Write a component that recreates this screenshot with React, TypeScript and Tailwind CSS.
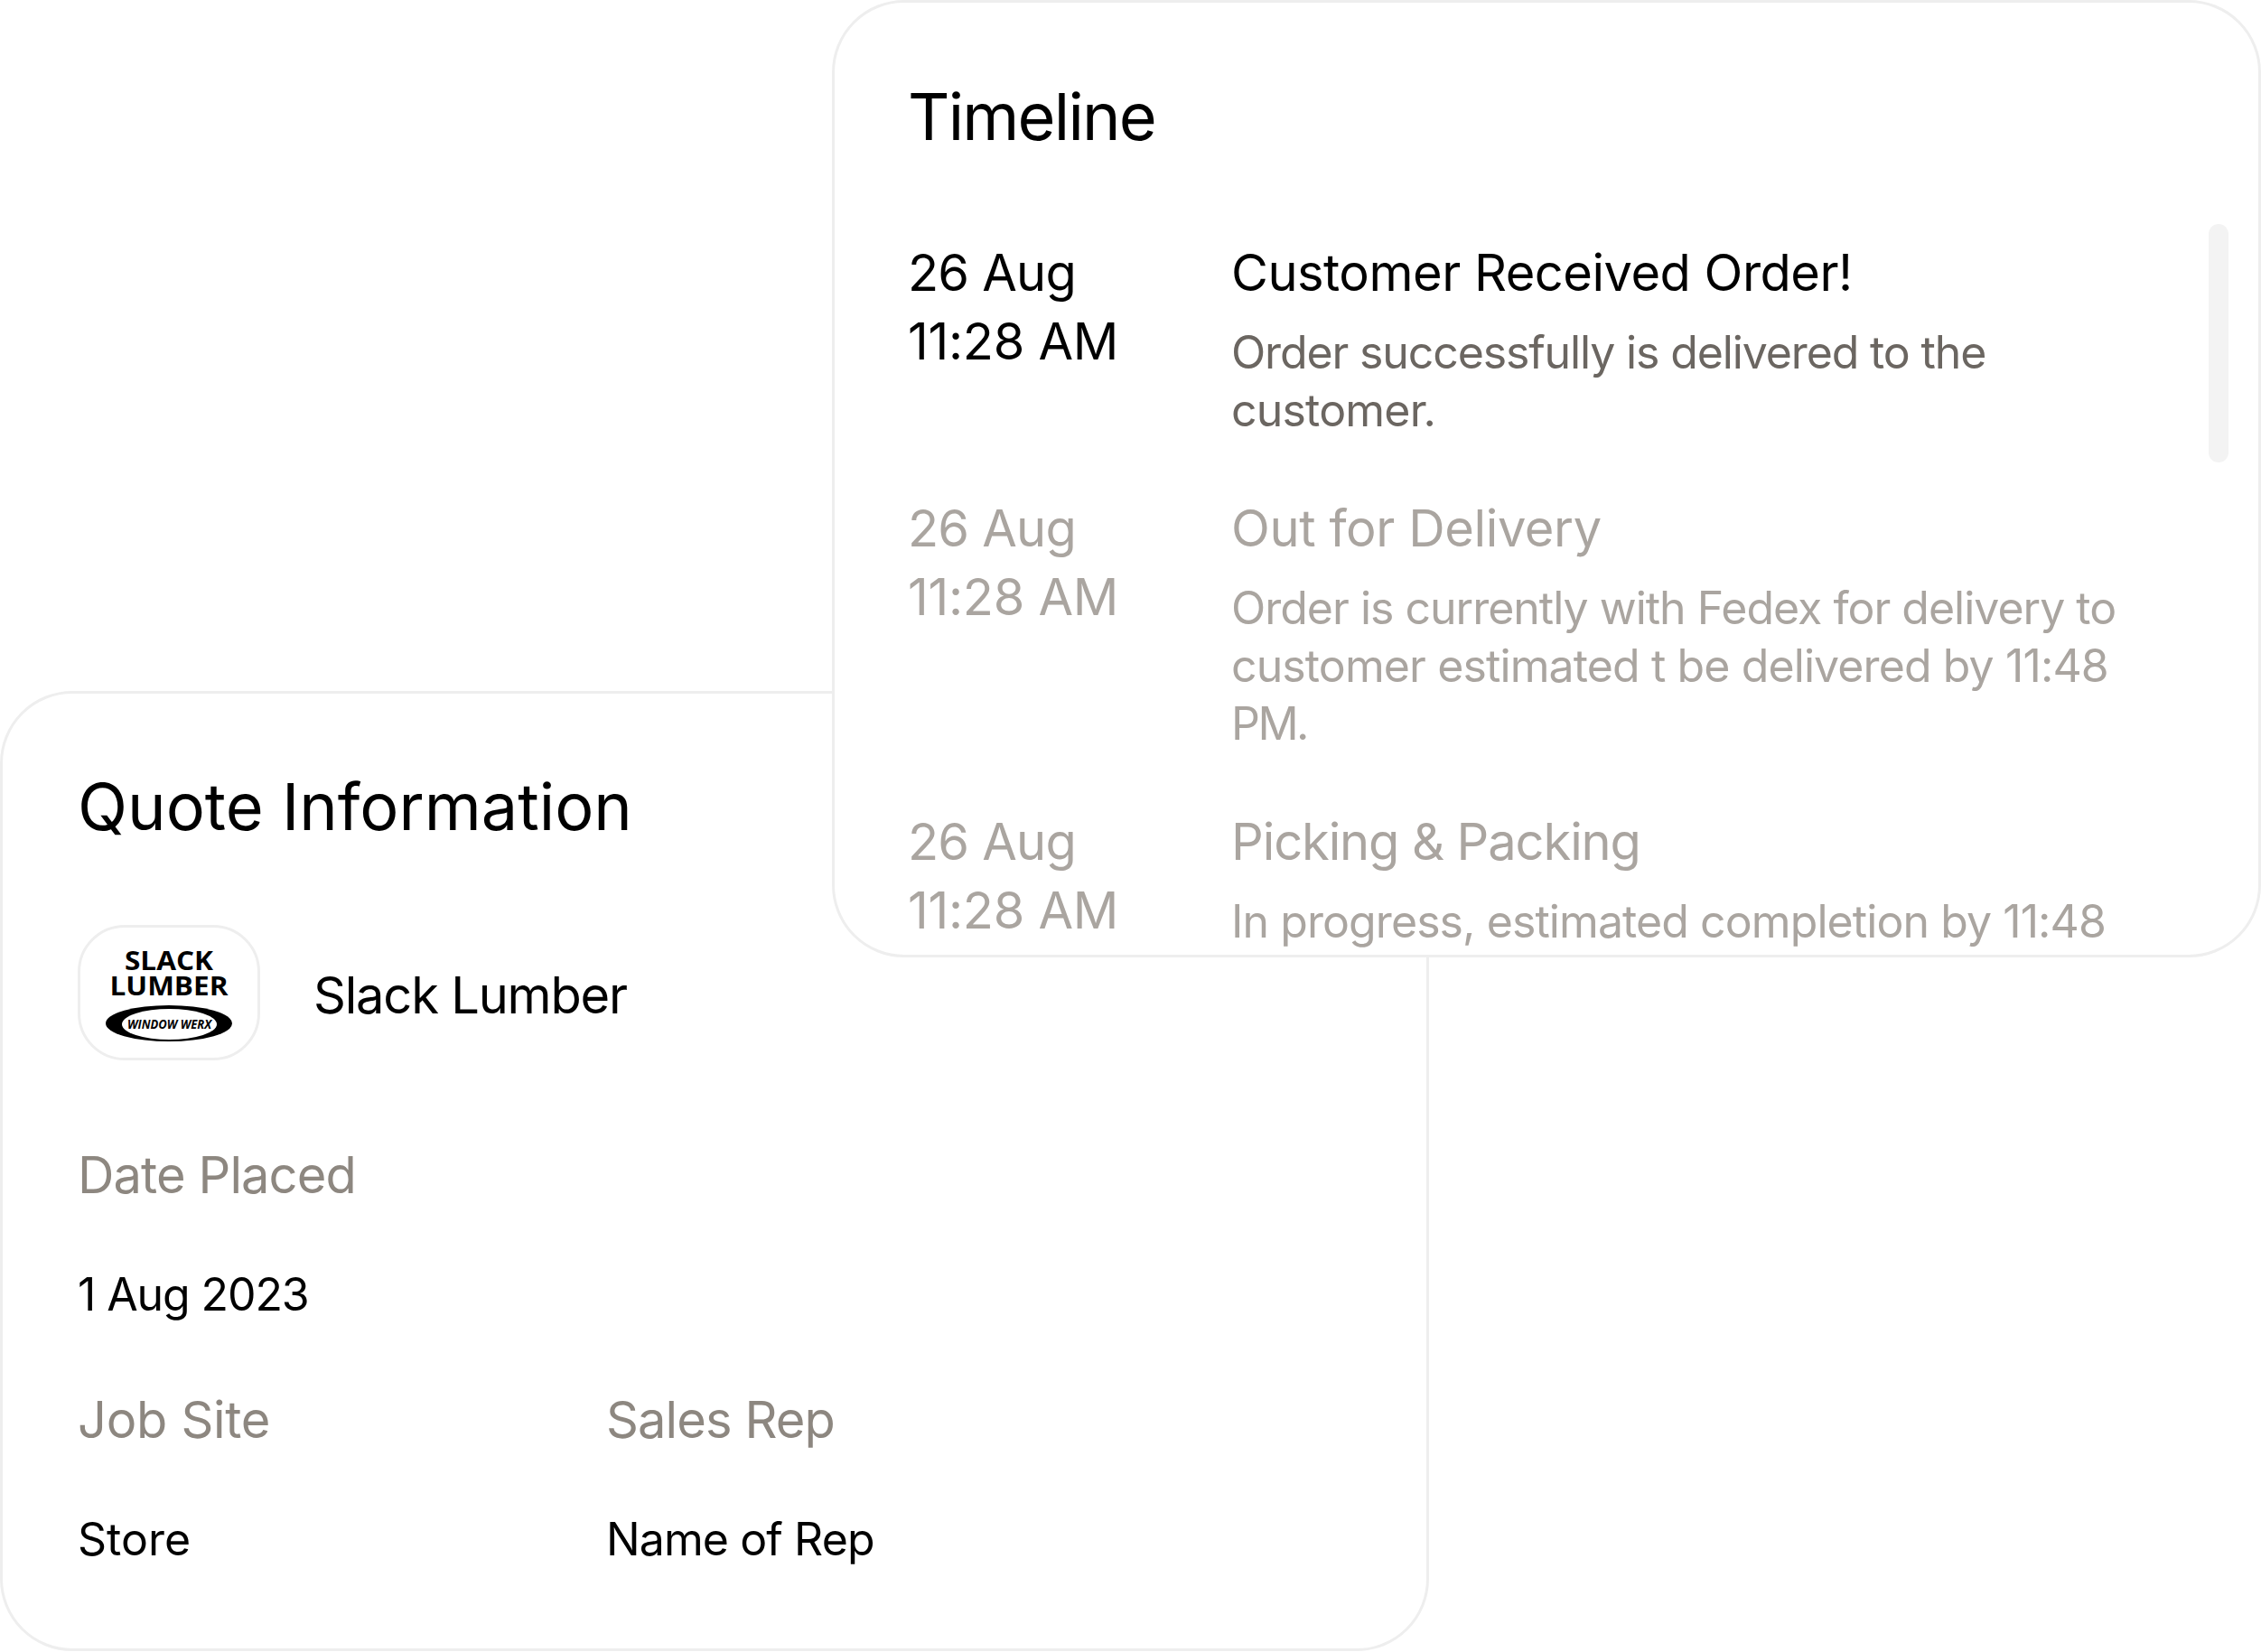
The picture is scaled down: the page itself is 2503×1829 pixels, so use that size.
const EVENTS = [
  {
    title: "Customer Received Order!",
    titleTracking: "tracking-[-0.5px]",
    lines: [
      { text: "Order successfully is delivered to the", tracking: "tracking-[-1.13px]" },
      { text: "customer.", tracking: "tracking-[-0.8px]" },
    ],
    active: true,
  },
  {
    title: "Out for Delivery",
    titleTracking: "tracking-[-0.4px]",
    lines: [
      { text: "Order is currently with Fedex for delivery to", tracking: "tracking-[-1px]" },
      { text: "customer estimated t be delivered by 11:48", tracking: "tracking-[-0.89px]" },
      { text: "PM.", tracking: "tracking-[-2.5px]" },
    ],
    active: false,
  },
  {
    title: "Picking & Packing",
    titleTracking: "tracking-[-1.1px]",
    lines: [{ text: "In progress, estimated completion by 11:48", tracking: "tracking-[-0.92px]" }],
    active: false,
  },
];

function SlackLogo() {
  return (
    <div className="w-[202px] h-[150px] shrink-0 rounded-[52px] border-[3px] border-[#eeeeee] bg-white flex items-center justify-center">
      <svg viewBox="0 0 201 149" className="w-[201px] h-[149px] shrink-0" role="img" aria-label="Slack Lumber Window Werx">
        <text x="100" y="49" textAnchor="middle" fontFamily="'Open Sans', sans-serif" fontWeight="700" fontSize="29" textLength="98" lengthAdjust="spacingAndGlyphs" fill="#000">SLACK</text>
        <text x="100" y="77" textAnchor="middle" fontFamily="'Open Sans', sans-serif" fontWeight="700" fontSize="29" textLength="131" lengthAdjust="spacingAndGlyphs" fill="#000">LUMBER</text>
        <ellipse cx="100" cy="108" rx="70" ry="20" fill="#000" />
        <ellipse cx="100.5" cy="109" rx="52.5" ry="17" fill="#fff" />
        <text x="100.5" y="114" textAnchor="middle" fontFamily="'Open Sans', sans-serif" fontWeight="700" fontStyle="italic" fontSize="15" textLength="93" lengthAdjust="spacingAndGlyphs" fill="#000">WINDOW WERX</text>
      </svg>
    </div>
  );
}

function Field({ label, value, labelClass, valueClass }: { label: string; value: string; labelClass: string; valueClass: string }) {
  return (
    <div>
      <div className={`text-[56px] leading-[75px] text-[#8d8780] ${labelClass}`}>{label}</div>
      <div className={`mt-[57px] text-[50px] leading-[75px] text-black ${valueClass}`}>{value}</div>
    </div>
  );
}

export default function App() {
  return (
    <div className="relative w-[2503px] h-[1829px] bg-white overflow-hidden font-['Inter',sans-serif]">
      <div className="pt-[765px]">
        <div className="w-[1582px] h-[1063px] rounded-[80px] border-[3px] border-[#eeeeee] bg-white pl-[83px] pt-[79px]">
          <h2 className="text-[72px] leading-[92px] text-black">Quote Information</h2>
          <div className="mt-[85px] flex items-center gap-[59px]">
            <SlackLogo />
            <span className="pt-[7px] text-[56px] leading-[75px] tracking-[-1.2px] text-black">Slack Lumber</span>
          </div>
          <div className="mt-[90px]">
            <Field label="Date Placed" value="1 Aug 2023" labelClass="tracking-[-0.9px]" valueClass="tracking-[-1.1px]" />
          </div>
          <div className="mt-[64px] grid grid-cols-[585px_1fr]">
            <Field label="Job Site" value="Store" labelClass="tracking-[-0.3px]" valueClass="tracking-normal" />
            <Field label="Sales Rep" value="Name of Rep" labelClass="tracking-[-0.9px]" valueClass="tracking-[-0.9px]" />
          </div>
        </div>
      </div>

      {/* Timeline card sits over the quote card */}
      <div className="absolute top-0 right-0 w-[1582px] h-[1060px] rounded-[80px] border-[3px] border-[#eeeeee] bg-white overflow-hidden pl-[81px] pt-[80px]">
        <h2 className="text-[72px] leading-[92px] tracking-[-1.8px] text-black">Timeline</h2>
        <div className="mt-[90px] flex flex-col gap-[62px]">
          {EVENTS.map((ev) => (
            <div key={ev.title} className="flex">
              <div className={`w-[358px] shrink-0 text-[56px] leading-[75px] ${ev.active ? "text-black" : "text-[#aaa5a0]"}`}>
                <div className="tracking-[-0.8px]">26 Aug</div>
                <div className="mt-px tracking-[-0.3px]">11:28 AM</div>
              </div>
              <div>
                <div className={`text-[56px] leading-[75px] ${ev.titleTracking} ${ev.active ? "text-black" : "text-[#aaa5a0]"}`}>{ev.title}</div>
                <div className={`mt-[18px] text-[50px] leading-[64px] whitespace-nowrap ${ev.active ? "text-[#6b6661]" : "text-[#aaa5a0]"}`}>
                  {ev.lines.map((l) => (
                    <div key={l.text} className={l.tracking}>{l.text}</div>
                  ))}
                </div>
              </div>
            </div>
          ))}
        </div>
        <div className="absolute top-[245px] right-[33px] w-[22px] h-[264px] rounded-full bg-[#f3f3f3]" />
      </div>
    </div>
  );
}
